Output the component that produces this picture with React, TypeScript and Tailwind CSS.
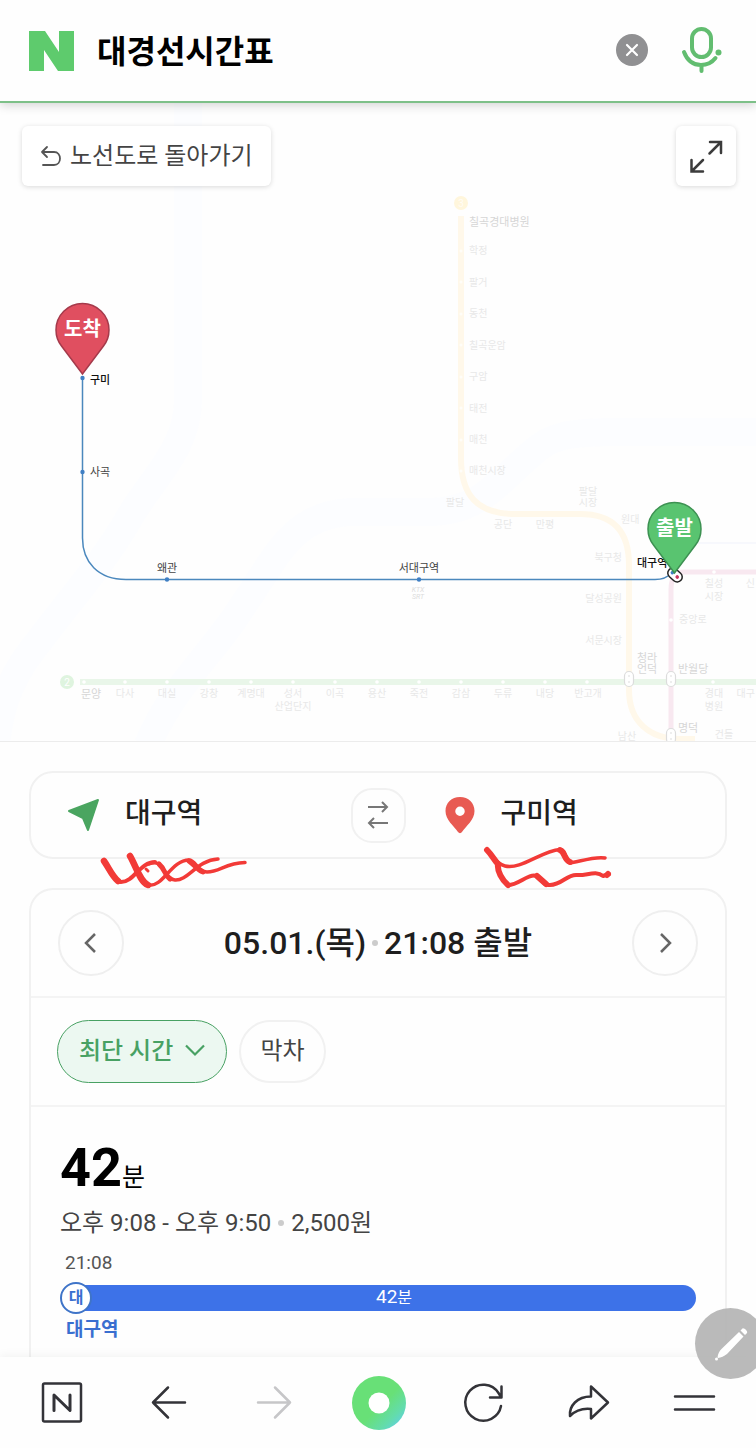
// Subway route screen: search header, line map, route summary and browser toolbar.

import type { ReactNode } from "react";

const SANS = "font-[Roboto,'Noto_Sans_CJK_KR',sans-serif]";

const LINE2_TICKS = [84, 125, 167, 209, 251, 293, 335, 377, 419, 461, 503, 545, 587, 713];
const LINE3_TICKS = [251, 282, 314, 345, 377, 408, 440, 471];

type Label = { x: number; y: number; text: string; anchor?: "start" | "middle" | "end"; strong?: boolean };

const FADED_LABELS: Label[] = [
  { x: 469, y: 226, text: "칠곡경대병원", strong: true },
  { x: 469, y: 254, text: "학정" },
  { x: 469, y: 286, text: "팔거" },
  { x: 469, y: 317, text: "동천" },
  { x: 469, y: 349, text: "칠곡운암" },
  { x: 469, y: 380, text: "구암" },
  { x: 469, y: 412, text: "태전" },
  { x: 469, y: 443, text: "매천" },
  { x: 469, y: 474, text: "매천시장" },
  { x: 455, y: 506, text: "팔달", anchor: "middle" },
  { x: 503, y: 528, text: "공단", anchor: "middle" },
  { x: 545, y: 528, text: "만평", anchor: "middle" },
  { x: 588, y: 495, text: "팔달", anchor: "middle" },
  { x: 588, y: 506, text: "시장", anchor: "middle" },
  { x: 621, y: 523, text: "원대" },
  { x: 622, y: 561, text: "북구청", anchor: "end" },
  { x: 622, y: 602, text: "달성공원", anchor: "end" },
  { x: 622, y: 644, text: "서문시장", anchor: "end" },
  { x: 637, y: 662, text: "청라", strong: true },
  { x: 637, y: 673, text: "언덕", strong: true },
  { x: 678, y: 673, text: "반월당", strong: true },
  { x: 679, y: 623, text: "중앙로" },
  { x: 714, y: 587, text: "칠성", anchor: "middle" },
  { x: 714, y: 600, text: "시장", anchor: "middle" },
  { x: 755, y: 587, text: "신", anchor: "end" },
  { x: 91, y: 698, text: "문양", anchor: "middle", strong: true },
  { x: 125, y: 697, text: "다사", anchor: "middle" },
  { x: 167, y: 697, text: "대실", anchor: "middle" },
  { x: 209, y: 697, text: "강창", anchor: "middle" },
  { x: 251, y: 697, text: "계명대", anchor: "middle" },
  { x: 293, y: 697, text: "성서", anchor: "middle" },
  { x: 293, y: 710, text: "산업단지", anchor: "middle" },
  { x: 335, y: 697, text: "이곡", anchor: "middle" },
  { x: 377, y: 697, text: "용산", anchor: "middle" },
  { x: 419, y: 697, text: "죽전", anchor: "middle" },
  { x: 461, y: 697, text: "감삼", anchor: "middle" },
  { x: 503, y: 697, text: "두류", anchor: "middle" },
  { x: 545, y: 697, text: "내당", anchor: "middle" },
  { x: 588, y: 697, text: "반고개", anchor: "middle" },
  { x: 714, y: 697, text: "경대", anchor: "middle" },
  { x: 714, y: 710, text: "병원", anchor: "middle" },
  { x: 755, y: 697, text: "대구", anchor: "end" },
  { x: 627, y: 740, text: "남산", anchor: "middle" },
  { x: 678, y: 732, text: "명덕", strong: true },
  { x: 724, y: 738, text: "건들", anchor: "middle" },
];

function MapPin({ x, y, fill, stroke, text }: { x: number; y: number; fill: string; stroke: string; text: string }) {
  return (
    <g transform={`translate(${x} ${y})`}>
      <path
        d="M0 0 L-21 -28 C-25 -33 -26.500 -38 -26.500 -44 A26.500 26.500 0 0 1 26.500 -44 C26.500 -38 25 -33 21 -28 Z"
        fill={fill}
        stroke={stroke}
        strokeWidth="1.500"
      />
      <text y="-38" textAnchor="middle" fill="#fff" className="text-[20px] font-bold">
        {text}
      </text>
    </g>
  );
}

function TransferMark({ x, y }: { x: number; y: number }) {
  return (
    <g transform={`translate(${x} ${y})`}>
      <rect x="-4.500" y="-7.500" width="9" height="15" rx="4.500" fill="#fff" stroke="#dcdcdc" strokeWidth="1.200" />
      <circle cy="-3" r="1" fill="#e8e8e8" />
      <circle cy="3" r="1" fill="#e8e8e8" />
    </g>
  );
}

function LineMap() {
  return (
    <svg
      viewBox="0 103 756 638"
      preserveAspectRatio="xMidYMid slice"
      className="block h-[638px] w-full"
      role="img"
      aria-label="노선도"
    >
      {/* river */}
      <g fill="none" stroke="#fcfdff" strokeWidth="28">
        <path d="M188 103 V400 C188 450 150 480 128 520 C105 560 70 600 40 640 C15 670 0 700 -4 745" />
        <path d="M148 745 C170 690 215 650 240 610 C275 560 290 515 350 512 H430 C480 512 500 480 530 455 C550 435 570 432 620 432 H756" />
      </g>

      {/* line 3 */}
      <path
        d="M461 216 V458 C461 495 477 514 515 514 H580 C612 514 629 530 629 565 V690 C629 722 650 739 680 739 H695"
        fill="none"
        stroke="#fff8ea"
        strokeWidth="6"
      />
      <circle cx="461" cy="203" r="7" fill="#fff6dc" />
      <text x="461" y="207" textAnchor="middle" fill="#fffcf5" className="text-[10px]">
        3
      </text>
      {LINE3_TICKS.map((y) => (
        <circle key={y} cx="461" cy={y} r="1.500" fill="#fffdf8" />
      ))}

      {/* line 2 */}
      <path d="M80 682 H756" stroke="#e9f6e9" strokeWidth="6" />
      <circle cx="67" cy="682" r="7" fill="#dff4df" />
      <text x="67" y="686" textAnchor="middle" fill="#fff" className="text-[10px]">
        2
      </text>
      {LINE2_TICKS.map((x) => (
        <circle key={x} cx={x} cy="682" r="1.800" fill="#fff" />
      ))}

      {/* line 1 */}
      <path d="M671 741 V590 C671 580 673 572 684 572 H756" fill="none" stroke="#f8e8f0" strokeWidth="5" />
      <circle cx="671" cy="620" r="1.800" fill="#fff" />
      <circle cx="714" cy="572" r="1.800" fill="#fff" />
      <path d="M690 543 H756" stroke="#f0f2fb" />

      <TransferMark x={629} y={679} />
      <TransferMark x={671} y={679} />
      <TransferMark x={671} y={736} />

      {FADED_LABELS.map((l, i) => (
        <text
          key={i}
          x={l.x}
          y={l.y}
          textAnchor={l.anchor ?? "start"}
          fill={l.strong ? "#d6d6d6" : "#e8e8e8"}
          className={l.strong ? "text-[11px]" : "text-[10px]"}
        >
          {l.text}
        </text>
      ))}
      <g textAnchor="middle" fill="#dcdcdc" className="text-[7px] italic">
        <text x="418" y="592">KTX</text>
        <text x="418" y="599">SRT</text>
      </g>

      {/* selected route */}
      <path
        d="M82.500 378 V538 C82.500 562 98 579.500 126 579.500 H655 C664 579.500 668 577 672 573"
        fill="none"
        stroke="#4b88bd"
        strokeWidth="1.500"
      />
      <g fill="#3f7fc4">
        <circle cx="82.500" cy="378" r="2.200" />
        <circle cx="82.500" cy="472" r="2.200" />
        <circle cx="167" cy="579.500" r="2.200" />
        <circle cx="419" cy="579.500" r="2.200" />
      </g>
      <g fill="#444" className="text-[11px]">
        <text x="90" y="384" fill="#111" className="font-medium">구미</text>
        <text x="90" y="476">사곡</text>
        <text x="167" y="572" textAnchor="middle">왜관</text>
        <text x="419" y="572" textAnchor="middle">서대구역</text>
        <text x="637" y="567" fill="#111" className="font-medium">대구역</text>
      </g>
      <g transform="rotate(42 675 575)">
        <rect x="667" y="570" width="16" height="10" rx="5" fill="#fff" stroke="#222" strokeWidth="1.500" />
        <circle cx="671.500" cy="575" r="1.800" fill="#3f7fc4" />
        <circle cx="678" cy="575" r="1.800" fill="#c8375f" />
      </g>
      <MapPin x={82.5} y={374} fill="#e04f60" stroke="#a53a4b" text="도착" />
      <MapPin x={674.5} y={573} fill="#59c470" stroke="#3d9152" text="출발" />
    </svg>
  );
}

function Header() {
  return (
    <header className="relative z-10 flex h-[103px] shrink-0 items-center border-b-2 border-[#7dc088] bg-[#fefefe] pr-[33px] pl-[29px] shadow-[0_2px_10px_rgba(0,0,0,0.18)]">
      <a href="#home" aria-label="NAVER">
        <svg width="46" height="42" viewBox="0 0 46 42" fill="#5ecb6d">
          <path d="M0 1H16L30 22V1H45V41H29L15 20V41H0Z" />
        </svg>
      </a>
      <input
        type="text"
        aria-label="검색어"
        defaultValue="대경선시간표"
        className="ml-[22px] min-w-0 flex-1 bg-transparent pt-0.5 text-[32px] font-bold text-black outline-none"
      />
      <button type="button" aria-label="지우기" className="mr-8">
        <svg width="34" height="34" viewBox="0 0 34 34" fill="none">
          <circle cx="17" cy="16" r="16" fill="#909092" />
          <path d="M12 11L22 21M22 11L12 21" stroke="#fff" strokeWidth="2.200" strokeLinecap="round" />
        </svg>
      </button>
      <button type="button" aria-label="음성 검색">
        <svg width="42" height="48" viewBox="0 0 42 48" fill="none" stroke="#62bd70" strokeWidth="4" strokeLinecap="round">
          <rect x="11" y="2" width="19" height="28" rx="9.500" />
          <path d="M3 25C6 33 12 38 20 38C26 38 31 35.500 34.500 31M20.500 38V44" />
          <circle cx="37.500" cy="25.500" r="3" fill="#62bd70" stroke="none" />
        </svg>
      </button>
    </header>
  );
}

function MapSection() {
  return (
    <section className="relative shrink-0 border-b border-[#ececec] bg-[#fefefe]">
      <LineMap />
      <div className="absolute inset-x-5 top-[23px] flex items-start justify-between">
        <button
          type="button"
          className="ml-0.5 flex h-[60px] items-center gap-2 rounded-md bg-white px-[18px] text-[24px] text-[#444] shadow-[0_1px_5px_rgba(0,0,0,0.15)]"
        >
          <svg width="22" height="22" viewBox="0 0 22 22" fill="none" stroke="#555" strokeWidth="1.800" strokeLinecap="round" strokeLinejoin="round">
            <path d="M7 2L2 7L7 12M2 7H14C22 7 22 20 14 20H3" />
          </svg>
          노선도로 돌아가기
        </button>
        <button
          type="button"
          aria-label="지도 확대"
          className="flex size-[60px] items-center justify-center rounded-md bg-white shadow-[0_1px_5px_rgba(0,0,0,0.15)]"
        >
          <svg width="34" height="34" viewBox="0 0 34 34" fill="none" stroke="#3c3c3c" strokeWidth="2.500" strokeLinecap="round">
            <path d="M21 3H32V14M31 4L20.500 14.500M2.500 21V32.500H14M3.500 31.500L14 21" />
          </svg>
        </button>
      </div>
    </section>
  );
}

function Scribbles() {
  return (
    <svg
      viewBox="30 771 698 120"
      className="pointer-events-none absolute -inset-x-0.5 -top-0.5 h-[120px]"
      fill="none"
      stroke="#f23a37"
      strokeLinecap="round"
      strokeLinejoin="round"
    >
      <path d="M105 862C110 869 115 882 122 882C135 882 141 862 156 862" strokeWidth="4" />
      <path d="M105 861C110 868 113 876 119 881" strokeWidth="6.500" />
      <path d="M131 856C137 866 141 882 149 885" strokeWidth="6.500" />
      <path d="M149 885C164 888 172 860 190 860C197 860 198 872 208 872C221 872 226 863 246 862.500" strokeWidth="3.500" />
      <path d="M150 864C165 857 164 879 176 880C189 881 198 860 219 859" strokeWidth="3.500" />
      <path d="M160 864C166 869 166 876 171 879M190 861C195 864 198 870 204 872" strokeWidth="5" />
      <path d="M147 869L149 871" strokeWidth="3" />
      <path d="M488 850C493 855 497 864 506 866C522 870 542 851 561 849.500C568 849 565 862 571 863C579 862 596 856 606 858" strokeWidth="3.500" />
      <path d="M488 850C493 855 496 861 499 864C498 871 503 880 509 885" strokeWidth="6" />
      <path d="M509 885C520 885 529 873 538 876C544 879 544 886 551 885C563 885 568 874 578 875C587 876 597 870 604 876L610 874" strokeWidth="4" />
      <path d="M561 850C566 852 565 860 571 862M538 876L547 884M608 875L609 874" strokeWidth="6" />
    </svg>
  );
}

function RouteCard() {
  return (
    <section className="relative grid h-[88px] grid-cols-[1fr_auto_1fr] items-center rounded-[24px] border-2 border-[#f1f1f1]">
      <button type="button" className="flex items-center gap-6 pl-9 text-[28px] leading-9 font-medium text-[#1e1e1e]">
        <svg width="34" height="34" viewBox="0 0 34 34" fill="#4aa560" stroke="#4aa560" strokeWidth="2" strokeLinejoin="round">
          <path d="M2 13L31 2L21 32L16 20Z" />
        </svg>
        <span className="pb-0.5">대구역</span>
      </button>
      <button
        type="button"
        aria-label="출발 도착 바꾸기"
        className="flex size-[55px] items-center justify-center rounded-[21px] border-2 border-[#f1f1f1]"
      >
        <svg width="22" height="28" viewBox="0 0 22 28" fill="none" stroke="#777" strokeWidth="2">
          <path d="M1 6H20M15 1L20 6L15 11M21 22H2M7 17L2 22L7 27" />
        </svg>
      </button>
      <button type="button" className="flex items-center gap-6 pl-[37px] text-[28px] leading-9 font-medium text-[#1e1e1e]">
        <svg width="34" height="38" viewBox="0 0 34 38">
          <path
            d="M17 1C8.500 1 2.500 7 2.500 15C2.500 24 11 30 15 36C16 37.500 18 37.500 19 36C23 30 31.500 24 31.500 15C31.500 7 25.500 1 17 1ZM17 10.500A4.700 4.700 0 1 1 17 20A4.700 4.700 0 1 1 17 10.500Z"
            fill="#e85a52"
            fillRule="evenodd"
          />
        </svg>
        <span className="pb-0.5">구미역</span>
      </button>
      <Scribbles />
    </section>
  );
}

function RoundButton({ label, d }: { label: string; d: string }) {
  return (
    <button
      type="button"
      aria-label={label}
      className="flex size-[66px] items-center justify-center rounded-full border-2 border-[#efefef]"
    >
      <svg width="14" height="22" viewBox="0 0 14 22" fill="none" stroke="#666" strokeWidth="2.500">
        <path d={d} />
      </svg>
    </button>
  );
}

function ResultCard() {
  return (
    <section className="mt-[29px] rounded-t-[24px] border-2 border-b-0 border-[#f1f1f1]">
      <div className="flex h-[106px] items-center justify-between px-[27px]">
        <RoundButton label="이전" d="M11 2L2 11L11 20" />
        <h1 className="flex items-center gap-1.5 text-[32px] font-medium text-[#1e1e1e]">
          05.01.(목)
          <span className="size-1.5 rounded-full bg-[#ccc]" />
          21:08 출발
        </h1>
        <RoundButton label="다음" d="M3 2L12 11L3 20" />
      </div>

      <div className="flex h-[111px] items-center gap-3 border-y-2 border-[#f4f4f4] px-[26px]">
        <div className="relative">
          <select
            aria-label="정렬"
            className="h-[63px] w-[170px] appearance-none rounded-full border border-[#48a163] bg-[#ecf8f1] pb-0.5 pl-[21px] text-[24px] font-medium text-[#48a163] outline-none"
          >
            <option>최단 시간</option>
            <option>최소 환승</option>
          </select>
          <svg
            width="20"
            height="13"
            viewBox="0 0 20 13"
            fill="none"
            stroke="#48a163"
            strokeWidth="2.200"
            className="pointer-events-none absolute top-6 right-[22px]"
          >
            <path d="M1 1.500L10 10.500L19 1.500" />
          </svg>
        </div>
        <button type="button" className="h-[63px] w-[87px] rounded-full border-2 border-[#f1f1f1] pb-0.5 text-[24px] text-[#444]">
          막차
        </button>
      </div>

      <div className="px-[29px] pt-7 pb-8">
        <p className="text-[54px] leading-[66px] font-bold text-black">
          42<span className="text-[25px] leading-none font-normal">분</span>
        </p>
        <p className="mt-1 flex items-center gap-[7px] text-[24px] leading-9 text-[#444]">
          오후 9:08 - 오후 9:50
          <span className="size-1.5 rounded-full bg-[#ccc]" />
          2,500원
        </p>
        <p className="mt-2 pl-[5px] text-[19px] leading-7 text-[#555]">21:08</p>
        <div className="mt-[5px] flex h-8 items-center">
          <span className="z-10 flex size-8 shrink-0 items-center justify-center rounded-full border-2 border-[#3f74c8] bg-white text-[16px] leading-none font-bold text-[#3a6fd0]">
            대
          </span>
          <span className="-ml-4 h-[26px] flex-1 rounded-r-full bg-[#3d72e8] pl-4 text-center text-[19px] leading-6 text-white">
            42<span className="text-[16px]">분</span>
          </span>
        </div>
        <p className="pl-1.5 text-[19px] leading-8 font-bold text-[#3a6fd0]">대구역</p>
      </div>
    </section>
  );
}

function ToolButton({ label, children }: { label: string; children: ReactNode }) {
  return (
    <button type="button" aria-label={label} className="flex items-center justify-center">
      <svg
        width="56"
        height="56"
        viewBox="0 0 56 56"
        fill="none"
        stroke="#333338"
        strokeWidth="2.500"
        strokeLinecap="round"
        strokeLinejoin="round"
      >
        {children}
      </svg>
    </button>
  );
}

function Toolbar() {
  return (
    <nav className="relative z-10 grid h-[91px] shrink-0 grid-cols-7 bg-[#fefefe] px-[9px] shadow-[0_-1px_10px_rgba(0,30,20,0.06)]">
      <ToolButton label="홈">
        <rect x="9" y="8.500" width="38" height="38" rx="1.500" />
        <path d="M20 35.500V20L36 35.500V20" strokeWidth="3" />
      </ToolButton>
      <ToolButton label="뒤로">
        <path d="M46 27.500H14M29 12.500L14 27.500L29 42.500" />
      </ToolButton>
      <ToolButton label="앞으로">
        <path d="M13 27.500H45M30 12.500L45 27.500L30 42.500" stroke="#c6c6c8" />
      </ToolButton>
      <ToolButton label="그린닷">
        <defs>
          <linearGradient id="dot" x1="0.200" y1="0.200" x2="0.950" y2="0.950">
            <stop offset="0.450" stopColor="#68e077" />
            <stop offset="0.750" stopColor="#63dcac" />
            <stop offset="1" stopColor="#5fcdf2" />
          </linearGradient>
        </defs>
        <circle cx="29" cy="28" r="27" fill="url(#dot)" stroke="none" />
        <circle cx="29" cy="28" r="10.500" fill="#fff" stroke="none" />
      </ToolButton>
      <ToolButton label="새로고침">
        <path d="M46 31A18 18 0 1 1 43.500 18L46 22M46.500 11.500V22.500H35" />
      </ToolButton>
      <ToolButton label="공유">
        <path d="M30 11.500L47 27.500L30 43.500V34C21 33 15 35 9 41C8 31 16 21.500 30 21.500Z" />
      </ToolButton>
      <ToolButton label="메뉴">
        <path d="M9 21.500H48M9 34.500H48" />
      </ToolButton>
    </nav>
  );
}

export default function App() {
  return (
    <div className={`${SANS} relative flex h-screen flex-col overflow-hidden bg-[#fefefe]`}>
      <Header />
      <main className="flex min-h-0 flex-1 flex-col overflow-hidden">
        <MapSection />
        <div className="px-[29px] pt-[29px]">
          <RouteCard />
          <ResultCard />
        </div>
      </main>
      <Toolbar />
      <button
        type="button"
        aria-label="편집"
        className="absolute -right-2.5 bottom-[69px] z-20 flex size-[71px] items-center justify-center rounded-full bg-[#b2b2b2]/90"
      >
        <svg width="34" height="34" viewBox="0 0 34 34" fill="#fff">
          <path d="M25 5L29.500 9.500L13 27C10 29.500 7 30.500 4 31L3.500 30.500C4 27 5 24 8 21.500Z" />
          <path d="M26.500 3.500L28.500 1.500C30 0.500 34 4.500 33 6L31 8Z" />
          <circle cx="2.500" cy="32" r="1.500" />
        </svg>
      </button>
    </div>
  );
}
